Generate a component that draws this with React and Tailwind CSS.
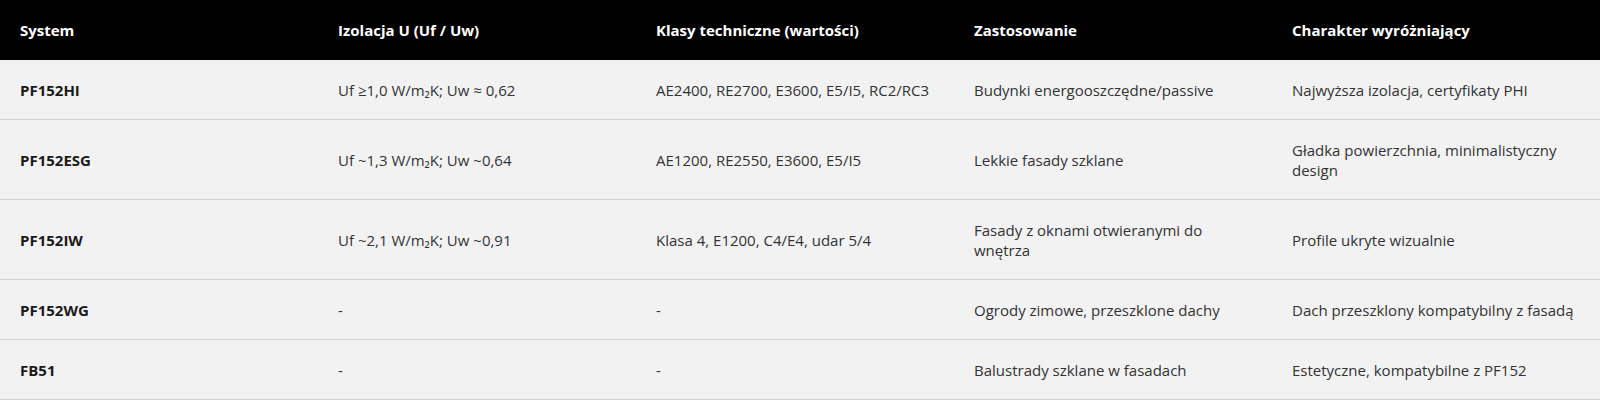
const rows = [
  {
    system: "PF152HI",
    u: "Uf ≥1,0 W/m₂K; Uw ≈ 0,62",
    klasy: "AE2400, RE2700, E3600, E5/I5, RC2/RC3",
    use: "Budynki energooszczędne/passive",
    feature: "Najwyższa izolacja, certyfikaty PHI",
  },
  {
    system: "PF152ESG",
    u: "Uf ~1,3 W/m₂K; Uw ~0,64",
    klasy: "AE1200, RE2550, E3600, E5/I5",
    use: "Lekkie fasady szklane",
    feature: "Gładka powierzchnia, minimalistyczny design",
  },
  {
    system: "PF152IW",
    u: "Uf ~2,1 W/m₂K; Uw ~0,91",
    klasy: "Klasa 4, E1200, C4/E4, udar 5/4",
    use: "Fasady z oknami otwieranymi do wnętrza",
    feature: "Profile ukryte wizualnie",
  },
  {
    system: "PF152WG",
    u: "-",
    klasy: "-",
    use: "Ogrody zimowe, przeszklone dachy",
    feature: "Dach przeszklony kompatybilny z fasadą",
  },
  {
    system: "FB51",
    u: "-",
    klasy: "-",
    use: "Balustrady szklane w fasadach",
    feature: "Estetyczne, kompatybilne z PF152",
  },
];

const headers = [
  "System",
  "Izolacja U (Uf / Uw)",
  "Klasy techniczne (wartości)",
  "Zastosowanie",
  "Charakter wyróżniający",
];

export default function App() {
  return (
    <div className="w-full bg-[#f2f2f2] font-['Open_Sans',sans-serif]">
      <table className="w-full table-fixed border-collapse text-[15px] leading-[20px]">
        <colgroup>
          <col className="w-[318px]" />
          <col className="w-[318px]" />
          <col className="w-[318px]" />
          <col className="w-[318px]" />
          <col />
        </colgroup>
        <thead>
          <tr className="bg-black text-white">
            {headers.map((h) => (
              <th key={h} className="h-[60px] px-5 text-left font-bold">
                {h}
              </th>
            ))}
          </tr>
        </thead>
        <tbody className="text-[#333]">
          {rows.map((r) => (
            <tr key={r.system} className="border-b border-[#d2d2d2]">
              <td className="px-5 py-[19.5px] font-bold text-[#1a1a1a]">{r.system}</td>
              <td className="px-5 py-[19.5px]">{r.u}</td>
              <td className="px-5 py-[19.5px]">{r.klasy}</td>
              <td className="px-5 py-[19.5px]">{r.use}</td>
              <td className="px-5 py-[19.5px]">{r.feature}</td>
            </tr>
          ))}
        </tbody>
      </table>
    </div>
  );
}
